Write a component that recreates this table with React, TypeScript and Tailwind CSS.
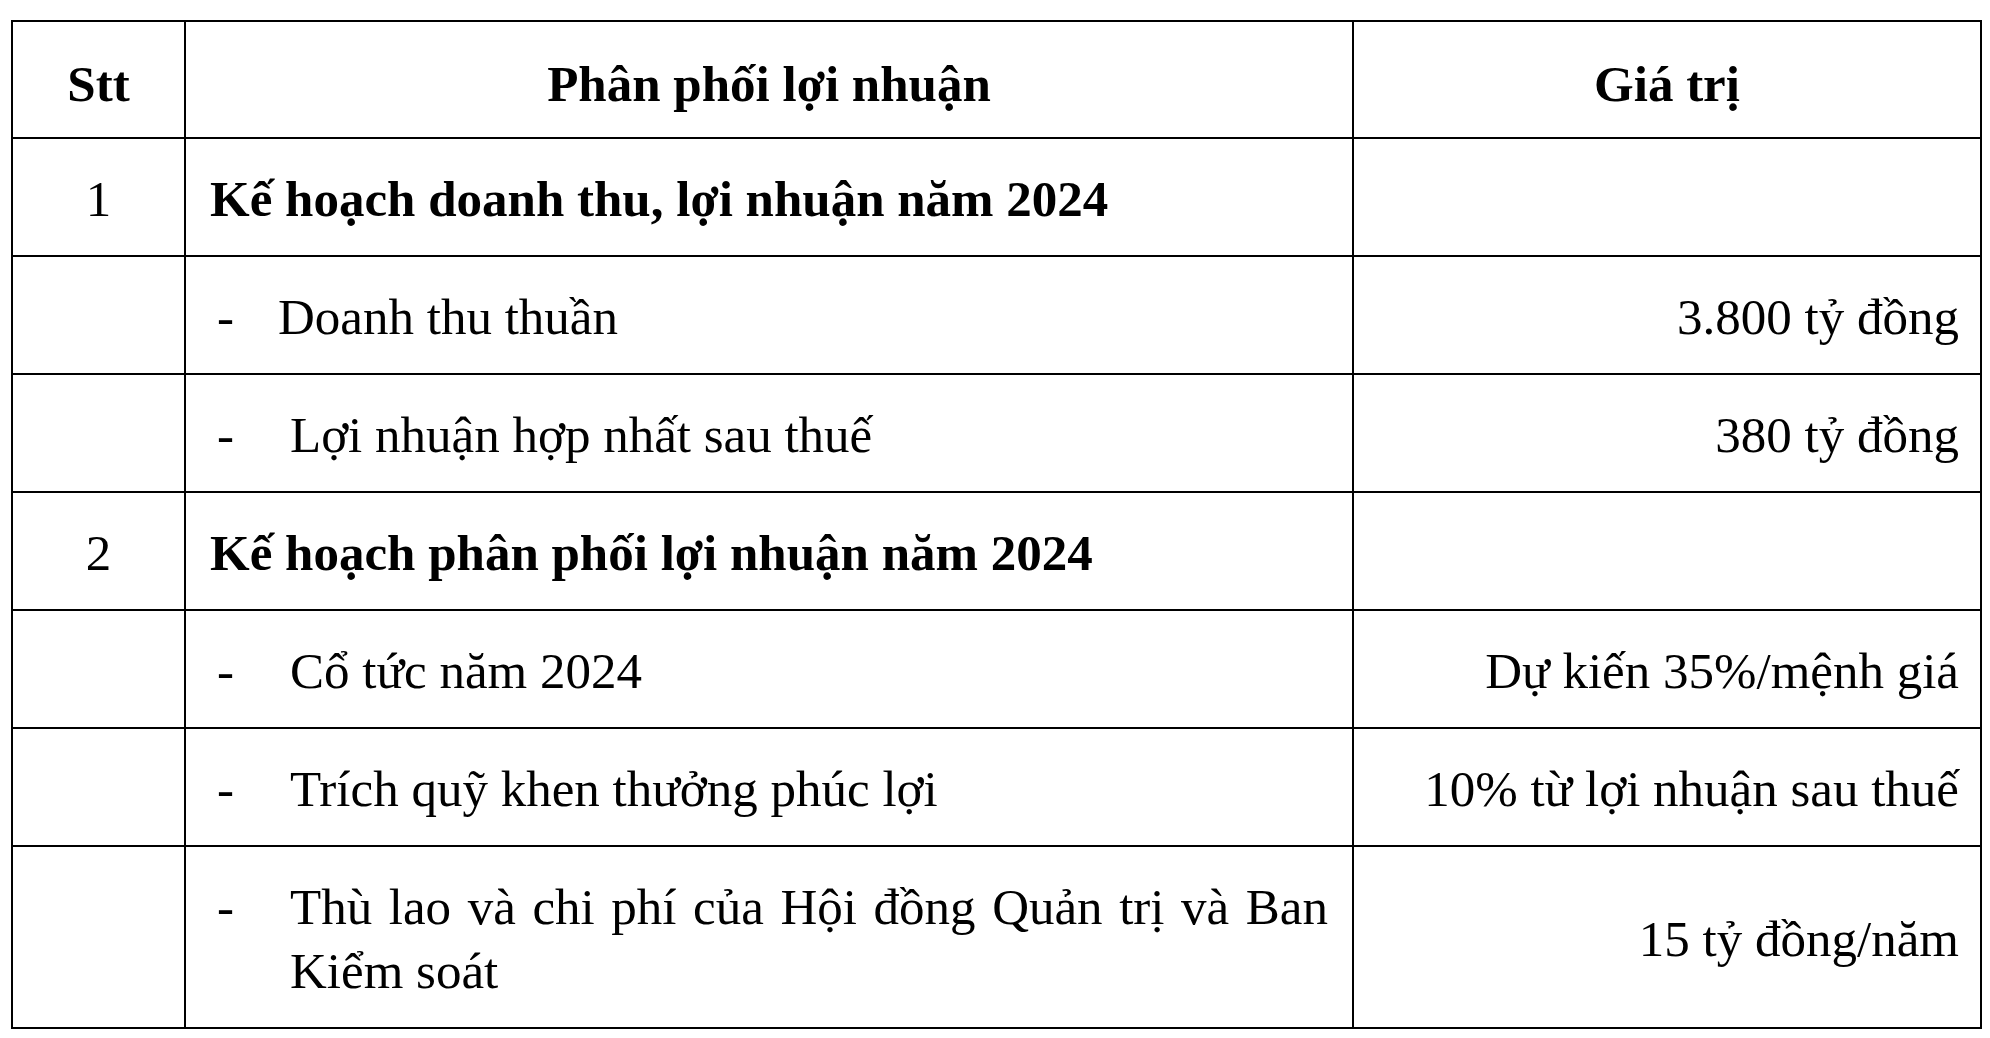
type Row = {
  stt?: string;
  label: string;
  value?: string;
  kind: 'section' | 'item';
  dashWidth?: string;
};

const rows: Row[] = [
  { stt: '1', label: 'Kế hoạch doanh thu, lợi nhuận năm 2024', kind: 'section' },
  { label: 'Doanh thu thuần', value: '3.800 tỷ đồng', kind: 'item', dashWidth: 'w-[61px]' },
  { label: 'Lợi nhuận hợp nhất sau thuế', value: '380 tỷ đồng', kind: 'item' },
  { stt: '2', label: 'Kế hoạch phân phối lợi nhuận năm 2024', kind: 'section' },
  { label: 'Cổ tức năm 2024', value: 'Dự kiến 35%/mệnh giá', kind: 'item' },
  { label: 'Trích quỹ khen thưởng phúc lợi', value: '10% từ lợi nhuận sau thuế', kind: 'item' },
  {
    label: 'Thù lao và chi phí của Hội đồng Quản trị và Ban Kiểm soát',
    value: '15 tỷ đồng/năm',
    kind: 'item',
  },
];

export default function App() {
  return (
    <div className="min-h-screen bg-white pt-[20px] pl-[11px] text-black [font-family:'Liberation_Serif','Times_New_Roman',serif]">
      <table className="w-[1971px] table-fixed border-collapse text-[51px] leading-[64px]">
        <colgroup>
          <col className="w-[173px]" />
          <col className="w-[1168px]" />
          <col />
        </colgroup>
        <thead>
          <tr>
            <th className="border-2 border-black px-[24px] pt-[30px] pb-[21px] text-center font-bold">Stt</th>
            <th className="border-2 border-black px-[24px] pt-[30px] pb-[21px] text-center font-bold">
              Phân phối lợi nhuận
            </th>
            <th className="border-2 border-black px-[24px] pt-[30px] pb-[21px] text-center font-bold">Giá trị</th>
          </tr>
        </thead>
        <tbody>
          {rows.map((row, i) => (
            <tr key={i}>
              <td className="border-2 border-black px-[24px] pt-[28px] pb-[24px] text-center align-middle">
                {row.stt}
              </td>
              <td className="border-2 border-black px-[24px] pt-[28px] pb-[24px] align-top">
                {row.kind === 'section' ? (
                  <span className="font-bold">{row.label}</span>
                ) : (
                  <div className="flex">
                    <span className={`ml-[7px] shrink-0 ${row.dashWidth ?? 'w-[73px]'}`}>-</span>
                    <span className="flex-1 text-justify">{row.label}</span>
                  </div>
                )}
              </td>
              <td className="border-2 border-black pl-[24px] pr-[21px] pt-[28px] pb-[24px] text-right align-middle">
                {row.value}
              </td>
            </tr>
          ))}
        </tbody>
      </table>
    </div>
  );
}
